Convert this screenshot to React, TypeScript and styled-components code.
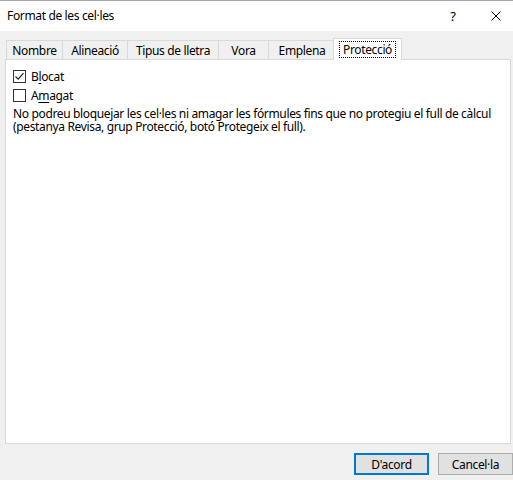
import React from 'react'
import styled, { createGlobalStyle } from 'styled-components'

const GlobalStyle = createGlobalStyle`
  html, body {
    margin: 0;
    padding: 0;
    background: #f0f0f0;
  }
  body {
    font-family: 'Noto Sans', 'Open Sans', sans-serif;
    font-size: 12px;
    letter-spacing: -0.35px;
    color: #000;
  }
`

interface TabDef {
  label: string
  width: number
}

const tabs: TabDef[] = [
  { label: 'Nombre', width: 57 },
  { label: 'Alineació', width: 66 },
  { label: 'Tipus de lletra', width: 92 },
  { label: 'Vora', width: 51 },
  { label: 'Emplena', width: 68 },
  { label: 'Protecció', width: 69 },
]

const CloseIcon = () => (
  <svg width="10" height="10" viewBox="0 0 10 10">
    <path d="M0.5 0.5 L9.5 9.5 M9.5 0.5 L0.5 9.5" stroke="#000" strokeWidth="1" />
  </svg>
)

const CheckMark = () => (
  <svg width="11" height="11" viewBox="0 0 11 11">
    <path d="M1.5 5.5 L4.2 8.2 L9.5 2.2" fill="none" stroke="#222" strokeWidth="1.2" />
  </svg>
)

const App: React.FC = () => {
  const selected = 'Protecció'

  return (
    <>
      <GlobalStyle />
      <Window>
        <TitleBar>
          <Title>Format de les cel·les</Title>
          <HelpButton>?</HelpButton>
          <CloseButton>
            <CloseIcon />
          </CloseButton>
        </TitleBar>

        <Body>
          <TabStrip>
            {tabs.map((t, i) => (
              <Tab key={t.label} $width={t.width} $first={i === 0} $active={t.label === selected}>
                {t.label === selected ? <Focus>{t.label}</Focus> : t.label}
              </Tab>
            ))}
          </TabStrip>

          <Panel>
            <CheckRow>
              <Box>
                <CheckMark />
              </Box>
              <Label>
                B<u>l</u>ocat
              </Label>
            </CheckRow>
            <CheckRow>
              <Box />
              <Label>
                A<u>m</u>agat
              </Label>
            </CheckRow>
            <Note>
              No podreu bloquejar les cel·les ni amagar les fórmules fins que no protegiu el full de càlcul
              <br />
              (pestanya Revisa, grup Protecció, botó Protegeix el full).
            </Note>
          </Panel>

          <Footer>
            <Button $default>D'acord</Button>
            <Button>Cancel·la</Button>
          </Footer>
        </Body>
      </Window>
    </>
  )
}

export default App

const Window = styled.div`
  width: 513px;
  height: 480px;
  display: flex;
  flex-direction: column;
  overflow: hidden;
`

const TitleBar = styled.div`
  height: 30px;
  flex-shrink: 0;
  background: #fff;
  border-top: 1px solid #a8a8a8;
  display: flex;
  align-items: center;
`

const Title = styled.div`
  flex: 1;
  padding-left: 7px;
  padding-bottom: 1px;
`

const HelpButton = styled.div`
  width: 30px;
  margin-right: 11px;
  text-align: center;
  font-size: 13px;
  padding-bottom: 1px;
`

const CloseButton = styled.div`
  width: 34px;
  height: 30px;
  display: flex;
  align-items: center;
  justify-content: center;
`

const Body = styled.div`
  flex: 1;
  background: #f0f0f0;
  display: flex;
  flex-direction: column;
  padding: 7px 2px 0 5px;
  min-height: 0;
`

const TabStrip = styled.div`
  display: flex;
  align-items: flex-end;
  height: 22px;
  padding-left: 1px;
  margin-bottom: -1px;
  position: relative;
  z-index: 1;
`

const Tab = styled.div<{ $width: number; $first?: boolean; $active?: boolean }>`
  box-sizing: border-box;
  width: ${({ $width }) => $width}px;
  height: ${({ $active }) => ($active ? 22 : 19)}px;
  margin-bottom: ${({ $active }) => ($active ? 0 : 1)}px;
  margin-left: ${({ $first, $active }) => ($first ? 0 : $active ? -3 : -1)}px;
  border: 1px solid #d9d9d9;
  border-bottom: none;
  background: ${({ $active }) => ($active ? '#fff' : '#f0f0f0')};
  position: relative;
  z-index: ${({ $active }) => ($active ? 2 : 1)};
  display: flex;
  align-items: center;
  justify-content: center;
  padding-top: ${({ $active }) => ($active ? 0 : 1)}px;
  white-space: nowrap;
`

const Focus = styled.span`
  outline: 1px dotted #000;
  outline-offset: 0;
  padding: 0 3px;
  line-height: 15px;
`

const Panel = styled.div`
  flex: 1;
  background: #fff;
  border: 1px solid #d9d9d9;
  padding: 7px 7px 0;
  display: flex;
  flex-direction: column;
`

const CheckRow = styled.div`
  height: 19px;
  display: flex;
  align-items: center;
`

const Box = styled.div`
  box-sizing: border-box;
  width: 13px;
  height: 13px;
  border: 1px solid #333;
  background: #fff;
  display: flex;
  align-items: center;
  justify-content: center;
`

const Label = styled.span`
  margin-left: 5px;

  u {
    text-underline-offset: 2px;
  }
`

const Note = styled.p`
  margin: 2px 0 0;
  line-height: 13px;
  white-space: nowrap;
`

const Footer = styled.div`
  height: 36px;
  flex-shrink: 0;
  display: flex;
  justify-content: flex-end;
  align-items: flex-start;
  gap: 9px;
  padding-top: 9px;
  box-sizing: border-box;
  margin-right: -2px;
`

const Button = styled.div<{ $default?: boolean }>`
  box-sizing: border-box;
  width: 75px;
  height: 22px;
  background: #e1e1e1;
  border: ${({ $default }) => ($default ? '2px solid #0078d7' : '1px solid #adadad')};
  display: flex;
  align-items: center;
  justify-content: center;
`
